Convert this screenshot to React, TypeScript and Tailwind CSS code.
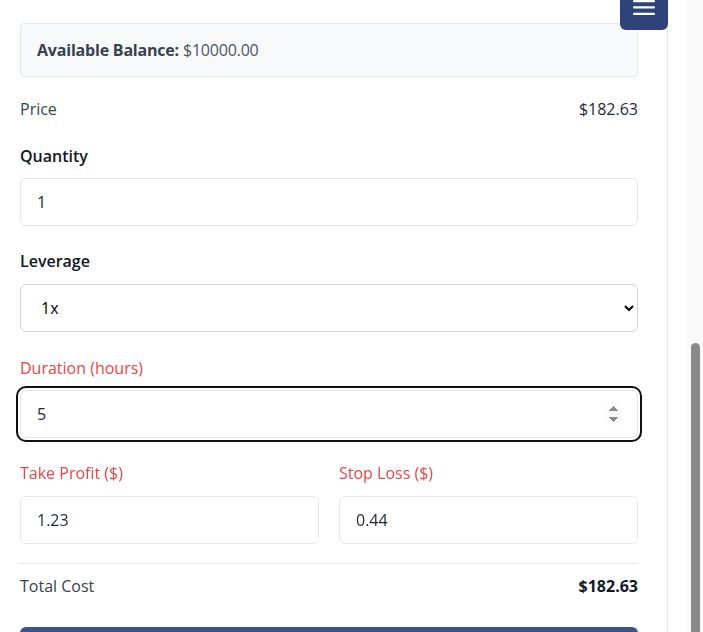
import { useState } from "react";

export default function App() {
  const [quantity, setQuantity] = useState("1");
  const [leverage, setLeverage] = useState("1");
  const [duration, setDuration] = useState("5");
  const [takeProfit, setTakeProfit] = useState("1.23");
  const [stopLoss, setStopLoss] = useState("0.44");

  const price = 182.63;
  const total = (price * Number(quantity || 0)).toFixed(2);

  return (
    <div className="h-screen w-full overflow-hidden flex bg-white font-['Open_Sans',sans-serif] text-base">
      <div className="relative w-[668px] shrink-0 border-r border-gray-200">
        <button className="absolute top-0 right-[-1px] w-12 h-[30px] bg-[#2d4379] rounded-b-md flex justify-center">
          <svg width="22" height="16" viewBox="0 0 22 16" className="block">
            <rect x="0" y="0" width="22" height="2.2" rx="1" fill="white" />
            <rect x="0" y="6.2" width="22" height="2.2" rx="1" fill="white" />
            <rect x="0" y="12.8" width="22" height="2.2" rx="1" fill="white" />
          </svg>
        </button>

        <div className="pl-5 pr-[29px] pt-[23px]">
          <div className="h-[54px] flex items-center px-4 bg-[#f8f9fa] border border-gray-200 rounded">
            <p className="text-[#4b5563] tracking-[-0.2px]">
              <span className="font-bold text-[#374151]">Available Balance:</span> $10000.00
            </p>
          </div>

          <div className="mt-5 flex justify-between">
            <span className="text-[#374151]">Price</span>
            <span className="text-[#1f2937]">${price.toFixed(2)}</span>
          </div>

          <label className="block mt-[23px] font-semibold text-[#111827]">Quantity</label>
          <input
            type="text"
            value={quantity}
            onChange={(e) => setQuantity(e.target.value)}
            className="mt-2.5 w-full h-12 px-4 border border-[#e5e7eb] rounded-md text-[#1f2937] outline-none"
          />

          <label className="block mt-[23px] font-semibold text-[#111827]">Leverage</label>
          <select
            value={leverage}
            onChange={(e) => setLeverage(e.target.value)}
            className="mt-[11px] w-full h-12 px-4 border border-[#d1d5db] rounded-md bg-white text-black outline-none"
          >
            <option value="1">1x</option>
            <option value="2">2x</option>
            <option value="5">5x</option>
            <option value="10">10x</option>
          </select>

          <label className="block mt-6 text-[#ef4444]">Duration (hours)</label>
          <input
            type="number"
            autoFocus
            value={duration}
            onChange={(e) => setDuration(e.target.value)}
            className="mt-2.5 w-full h-12 px-4 border border-[#e5e7eb] rounded-md text-[#1f2937] outline-2 outline-solid outline-offset-2 outline-[#101010]"
          />

          <div className="mt-[23px] grid grid-cols-2 gap-5">
            <div>
              <label className="block text-[#ef4444]">Take Profit ($)</label>
              <input
                type="text"
                value={takeProfit}
                onChange={(e) => setTakeProfit(e.target.value)}
                className="mt-[11px] w-full h-12 px-4 border border-[#e5e7eb] rounded-md text-[#1f2937] outline-none"
              />
            </div>
            <div>
              <label className="block text-[#ef4444]">Stop Loss ($)</label>
              <input
                type="text"
                value={stopLoss}
                onChange={(e) => setStopLoss(e.target.value)}
                className="mt-[11px] w-full h-12 px-4 border border-[#e5e7eb] rounded-md text-[#1f2937] outline-none"
              />
            </div>
          </div>

          <div className="mt-[19px] border-t border-[#e5e7eb]" />

          <div className="mt-2.5 flex justify-between">
            <span className="text-[#374151]">Total Cost</span>
            <span className="font-bold text-[#111827]">${total}</span>
          </div>

          <button className="mt-[29px] w-full h-12 rounded-md bg-[#3d5286] text-white font-semibold">
            Place Order
          </button>
        </div>
      </div>

      <div className="flex-1" />

      <div className="w-4 shrink-0 bg-[#f9f9f9] pl-1 pr-[3px] pt-[343px]">
        <div className="h-full rounded-t-full bg-[#8a8a8a]" />
      </div>
    </div>
  );
}
